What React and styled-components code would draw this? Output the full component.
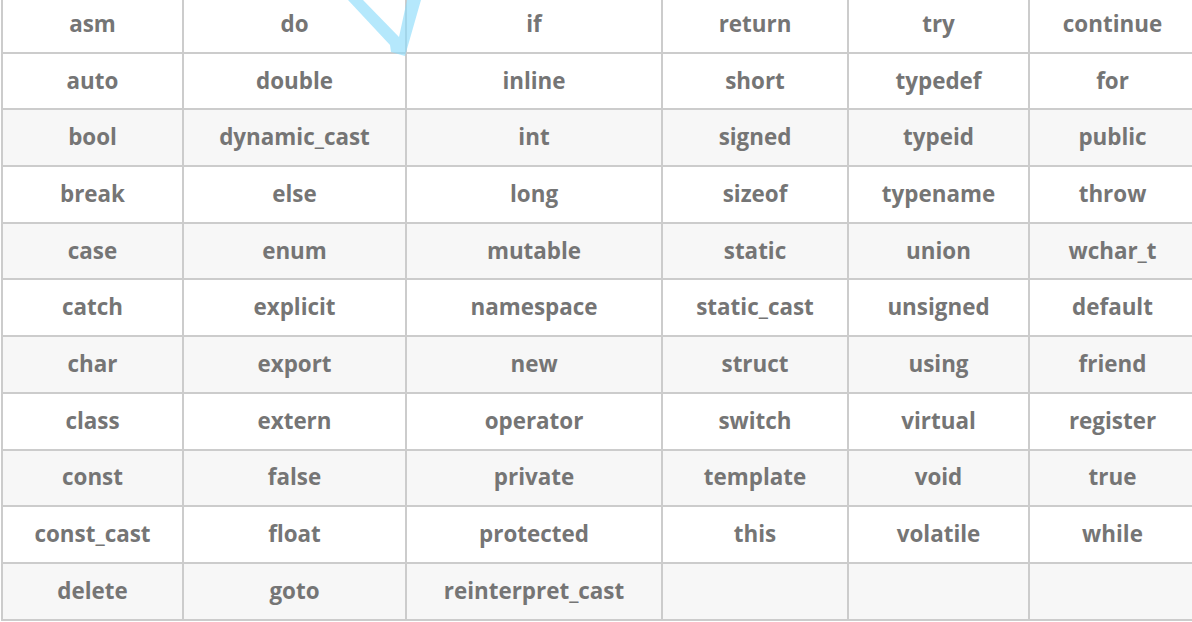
import styled, { createGlobalStyle } from "styled-components"

const GlobalStyle = createGlobalStyle`
    html, body {
        margin: 0;
        padding: 0;
        background: #fff;
        overflow: hidden;
    }
    body {
        font-family: "Open Sans", "Noto Sans", sans-serif;
    }
`;

const Page = styled.div`
    position: relative;
    width: 1192px;
    height: 622px;
    overflow: hidden;
`;

const KeywordTable = styled.table`
    border-collapse: collapse;
    table-layout: fixed;
    width: 1194px;
    margin: -5px 0 0 1px;
    border: 2px solid #ccc;
`;

const Row = styled.tr`
    height: 56.7px;
    background-color: ${props => props.$shaded ? "#f7f7f7" : "#fff"};
`;

const Cell = styled.td`
    border: 2px solid #ccc;
    padding: 0 0 2px;
    text-align: center;
    vertical-align: middle;
    color: #757575;
    font-size: 22.4px;
    font-weight: 700;
    white-space: nowrap;
`;

const Watermark = styled.svg`
    position: absolute;
    left: 0;
    top: 0;
    pointer-events: none;
`;

const columnWidths = [181, 223, 256, 186, 181, 167];

const rows = [
    ["asm", "do", "if", "return", "try", "continue"],
    ["auto", "double", "inline", "short", "typedef", "for"],
    ["bool", "dynamic_cast", "int", "signed", "typeid", "public"],
    ["break", "else", "long", "sizeof", "typename", "throw"],
    ["case", "enum", "mutable", "static", "union", "wchar_t"],
    ["catch", "explicit", "namespace", "static_cast", "unsigned", "default"],
    ["char", "export", "new", "struct", "using", "friend"],
    ["class", "extern", "operator", "switch", "virtual", "register"],
    ["const", "false", "private", "template", "void", "true"],
    ["const_cast", "float", "protected", "this", "volatile", "while"],
    ["delete", "goto", "reinterpret_cast", "", "", ""],
];

const App = () => {
    return (
        <Page>
            <GlobalStyle />
            <KeywordTable>
                <colgroup>
                    {columnWidths.map((w, i) => <col key={i} style={{ width: w }} />)}
                </colgroup>
                <tbody>
                    {rows.map((row, r) => (
                        <Row key={r} $shaded={r >= 2 && r % 2 === 0}>
                            {row.map((word, c) => <Cell key={c}>{word}</Cell>)}
                        </Row>
                    ))}
                </tbody>
            </KeywordTable>
            {/* tip of an arrow drawn over the table in the original page */}
            <Watermark width="1192" height="622" viewBox="0 0 1192 622">
                <polygon
                    points="348,0 363,0 399,37 407,0 421,0 405,56 391,52 390,45"
                    fill="#8ddcfb"
                    opacity="0.65"
                />
            </Watermark>
        </Page>
    );
};

export default App;
